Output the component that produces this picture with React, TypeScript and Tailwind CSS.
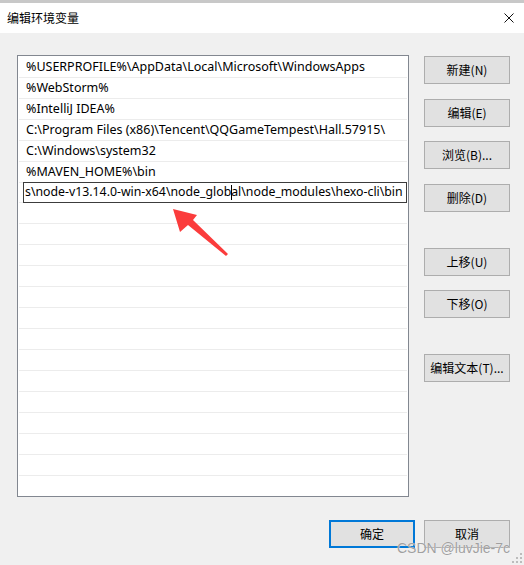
import React from "react";

const paths = [
  "%USERPROFILE%\\AppData\\Local\\Microsoft\\WindowsApps",
  "%WebStorm%",
  "%IntelliJ IDEA%",
  "C:\\Program Files (x86)\\Tencent\\QQGameTempest\\Hall.57915\\",
  "C:\\Windows\\system32",
  "%MAVEN_HOME%\\bin",
];

const cjk = "font-['Microsoft_YaHei_UI','Noto_Sans_CJK_SC',sans-serif]";

function WinButton({ label, primary, className = "" }: { label: string; primary?: boolean; className?: string }) {
  return (
    <button
      className={`w-[86px] h-[28px] bg-[#e1e1e1] text-[12px] text-black flex items-center justify-center ${cjk} ${
        primary ? "border-2 border-[#0078d7]" : "border border-[#adadad]"
      } ${className}`}
    >
      {label}
    </button>
  );
}

export default function App() {
  const emptyRows = Array.from({ length: 14 });

  return (
    <div className="relative w-[524px] h-[565px] bg-[#f0f0f0] flex flex-col overflow-hidden">
      {/* title bar */}
      <div className="h-[33px] bg-white border-t-[3px] border-[#c8c8c8] flex items-center justify-between pl-[7px] pr-[10px]">
        <span className={`text-[12px] text-black ${cjk}`}>编辑环境变量</span>
        <svg width="10" height="10" viewBox="0 0 10 10">
          <path d="M0.5 0.5 L9.5 9.5 M9.5 0.5 L0.5 9.5" stroke="#111" strokeWidth="1" />
        </svg>
      </div>

      <div className="flex pt-[22px] pl-[17px]">
        {/* list */}
        <div className="w-[392px] h-[442px] bg-white border border-[#828790] overflow-hidden pt-px px-px">
          {paths.map((p) => (
            <div
              key={p}
              className="h-[21px] border-b border-[#ececec] pl-[7px] flex items-center text-[12.5px] text-black whitespace-nowrap font-['Segoe_UI','Noto_Sans',sans-serif]"
            >
              {p}
            </div>
          ))}
          <div className="h-[21px] border-b border-[#ececec] pl-[4px]">
            <div className="h-[21px] -mt-px border border-[#3c3c3c] bg-white flex items-center overflow-hidden pl-px text-[12.3px] text-black whitespace-nowrap font-['Segoe_UI','Noto_Sans',sans-serif]">
              <span>
                s\node-v13.14.0-win-x64\node_glob
                <span className="inline-block w-px h-[15px] bg-black align-middle mr-[-1px]" />
                al\node_modules\hexo-cli\bin
              </span>
            </div>
          </div>
          {emptyRows.map((_, i) => (
            <div key={i} className="h-[21px] border-b border-[#ececec]" />
          ))}
        </div>

        {/* side buttons */}
        <div className="ml-[15px] pt-px flex flex-col">
          <WinButton label="新建(N)" />
          <WinButton label="编辑(E)" className="mt-[15px]" />
          <WinButton label="浏览(B)..." className="mt-[14px]" />
          <WinButton label="删除(D)" className="mt-[15px]" />
          <WinButton label="上移(U)" className="mt-[36px]" />
          <WinButton label="下移(O)" className="mt-[14px]" />
          <WinButton label="编辑文本(T)..." className="mt-[36px]" />
        </div>
      </div>

      {/* bottom buttons */}
      <div className="flex justify-end gap-[9px] pr-[14px] mt-[23px]">
        <WinButton label="确定" primary />
        <WinButton label="取消" />
      </div>

      {/* red annotation arrow */}
      <svg className="absolute left-0 top-0 pointer-events-none" width="524" height="565">
        <polygon points="173,209 197,215 193,220 228,254 226,256 188,225 180,232" fill="#fb3c3c" />
      </svg>

      {/* resize grip */}
      <svg className="absolute right-[2px] bottom-[2px]" width="10" height="10" viewBox="0 0 10 10">
        <rect x="8" y="0" width="2" height="2" fill="#bcbcbc" />
        <rect x="4" y="4" width="2" height="2" fill="#bcbcbc" />
        <rect x="8" y="4" width="2" height="2" fill="#bcbcbc" />
        <rect x="0" y="8" width="2" height="2" fill="#bcbcbc" />
        <rect x="4" y="8" width="2" height="2" fill="#bcbcbc" />
        <rect x="8" y="8" width="2" height="2" fill="#bcbcbc" />
      </svg>

      {/* watermark */}
      <div className="absolute left-[397px] top-[541px] text-[14px] leading-none text-[#a0a0a0] font-['Liberation_Sans',Arial,sans-serif] [text-shadow:0_0_1px_#fff]">
        CSDN @luvJie-7c
      </div>
    </div>
  );
}
